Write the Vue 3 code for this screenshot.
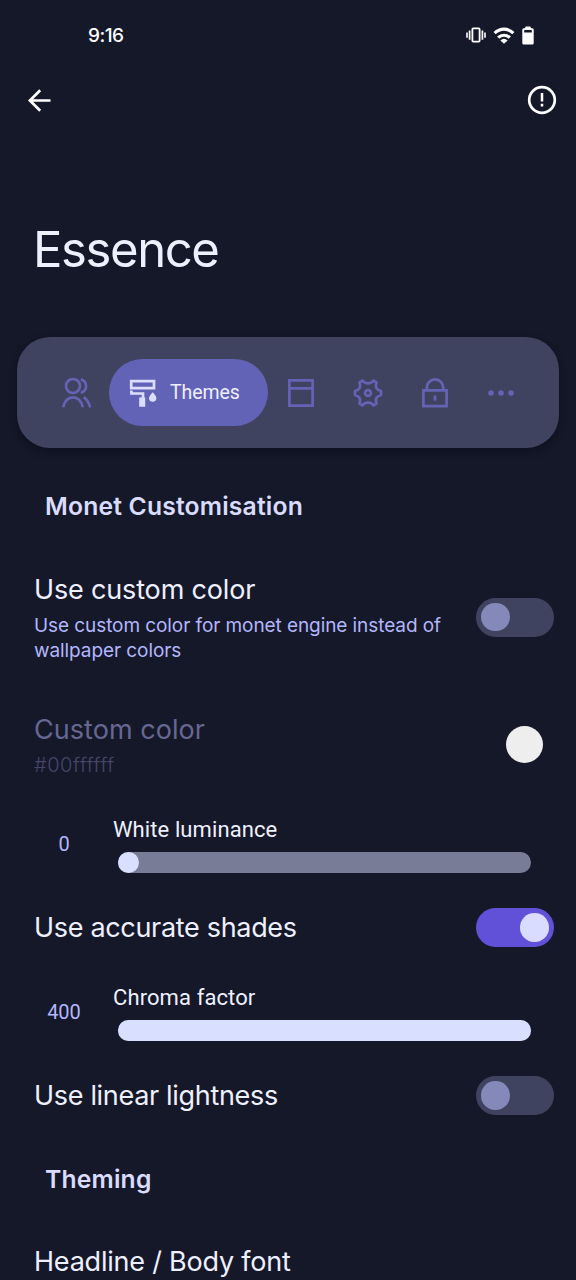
<script setup>
import { ref } from 'vue'

const customColor = ref(false)
const accurateShades = ref(true)
const linearLightness = ref(false)
const luminance = { label: 'White luminance', value: 0, max: 400 }
const chroma = { label: 'Chroma factor', value: 400, max: 400 }

const fill = (s) => ({ width: `calc(21px + (100% - 21px) * ${s.value / s.max})` })
</script>

<template>
  <div class="screen">
    <header class="status">
      <span class="clock">9:16</span>
      <div class="indicators">
        <svg width="20" height="16" viewBox="0 0 20 16" fill="none" stroke="#fff">
          <rect x="6.4" y="1.4" width="7.2" height="13.2" rx="0.8" stroke-width="1.8" />
          <path d="M3.6 3.4v9.4M16.4 3.4v9.4" stroke-width="1.7" />
          <path d="M1 5.4v5.4M19 5.4v5.4" stroke-width="1.6" />
        </svg>
        <svg width="22" height="17" viewBox="0 0 22 17" fill="none" stroke="#fff" stroke-width="3.1">
          <path d="M1.6 6.2C7 .8 15 .8 20.4 6.2" />
          <path d="M5.2 10.6c3.200-3.200 8.400-3.200 11.600 0" />
          <path d="M7.400 13.400Q11 10.200 14.600 13.400L11 16.800Z" fill="#fff" stroke="none" />
        </svg>
        <svg width="12" height="19" viewBox="0 0 12 19">
          <path
            d="M3.200 1.500q0-1 1-1h3.600q1 0 1 1v.8h1.400q1.500 0 1.500 1.500v13.200q0 1.500-1.500 1.500H1.800Q.3 18.500.3 17V3.800Q.3 2.300 1.800 2.300h1.400zM2.200 4v2.600h7.600V4z"
            fill="#fff" fill-rule="evenodd"
          />
        </svg>
      </div>
    </header>

    <nav class="toolbar">
      <svg width="24" height="24" viewBox="0 0 24 24" fill="none" stroke="#fff" stroke-width="2.700">
        <path d="M23.500 12.500H3.500M13.200 2.200 2.900 12.500l10.300 10.300" />
      </svg>
      <svg width="30" height="30" viewBox="0 0 30 30" fill="none" stroke="#fff" stroke-width="2.700">
        <circle cx="15" cy="15" r="12.800" />
        <path d="M15 8v8.500M15 18.800v2.700" stroke-width="2.500" />
      </svg>
    </nav>

    <h1>Essence</h1>

    <div class="tabs">
      <svg width="31" height="31" viewBox="0 0 31 31">
        <circle cx="12" cy="9" r="7" />
        <path d="M2.200 30.300C4.500 17 19.500 17 21.800 30.300" />
        <path d="M19.800 2.500c7 1.500 7 11.700 0 13.200M22.800 20.200q4.500 3.200 6.400 10.100" />
      </svg>
      <div class="pill">
        <svg width="28" height="28" viewBox="0 0 28 28">
          <path d="M2.200 2.200h22.800v7h-22.800z" fill="none" stroke="#dcdeff" stroke-width="2.700" />
          <path d="M2.400 11.500v3h11.600v5" fill="none" stroke="#dcdeff" stroke-width="2.700" />
          <path d="M10.200 18.600h6v9.200h-6zM23.700 13.200q3.700 4 3.700 5.800a3.700 3.700 0 0 1-7.400 0q0-1.800 3.700-5.800z" fill="#dcdeff" />
        </svg>
        <span>Themes</span>
      </div>
      <svg class="window" width="26" height="28" viewBox="0 0 26 28">
        <path d="M1.400 1.400h23.200v25.200H1.400zM1.400 9.400h23.200" />
      </svg>
      <svg class="gear" width="30" height="28" viewBox="0 0 30 28">
        <path
          d="M9.400 1.500Q11.500 4.300 15 4.300T20.600 1.500L23.600 3.600Q22.200 7 23.600 9.200T28 12V16Q25 16.600 23.600 18.800T23.600 24.400L20.600 26.500Q18.500 23.700 15 23.700T9.400 26.500L6.400 24.400Q7.800 21 6.400 18.800T2 16V12Q5 11.400 6.400 9.200T6.400 3.600Z"
          stroke-linejoin="round"
        />
        <circle cx="15" cy="14" r="2.900" />
      </svg>
      <svg class="lock" width="26" height="30" viewBox="0 0 26 30">
        <path d="M1.400 12.400h23.200v15.700H1.400zM4.900 12V9.500a8.100 8.100 0 0 1 16.200 0V12" />
        <path d="M13 17.500v5.200" />
      </svg>
      <svg class="dots" width="26" height="6" viewBox="0 0 26 6">
        <circle cx="3" cy="3" r="2.800" /><circle cx="13" cy="3" r="2.800" /><circle cx="23" cy="3" r="2.800" />
      </svg>
    </div>

    <h2>Monet Customisation</h2>

    <section class="row tall">
      <div class="copy">
        <div class="title">Use custom color</div>
        <div class="sub">Use custom color for monet engine instead of wallpaper colors</div>
      </div>
      <button class="switch" :class="{ on: customColor }" @click="customColor = !customColor"></button>
    </section>

    <section class="row color">
      <div class="copy">
        <div class="title dim">Custom color</div>
        <div class="sub hex">#00ffffff</div>
      </div>
      <span class="swatch"></span>
    </section>

    <section class="slider">
      <span class="value">{{ luminance.value }}</span>
      <div class="control">
        <div class="label">{{ luminance.label }}</div>
        <div class="track"><div class="fill" :style="fill(luminance)"></div></div>
      </div>
    </section>

    <section class="row">
      <div class="title tight">Use accurate shades</div>
      <button class="switch" :class="{ on: accurateShades }" @click="accurateShades = !accurateShades"></button>
    </section>

    <section class="slider">
      <span class="value">{{ chroma.value }}</span>
      <div class="control">
        <div class="label">{{ chroma.label }}</div>
        <div class="track"><div class="fill" :style="fill(chroma)"></div></div>
      </div>
    </section>

    <section class="row">
      <div class="title tight">Use linear lightness</div>
      <button class="switch" :class="{ on: linearLightness }" @click="linearLightness = !linearLightness"></button>
    </section>

    <h2 class="theming">Theming</h2>
    <div class="title last">Headline / Body font</div>
  </div>
</template>

<style>
body { background: #151829; }
</style>

<style scoped>
.screen {
  height: 1280px;
  overflow: hidden;
  background: #151829;
  color: #eff0ff;
  font-family: Inter, "Open Sans", sans-serif;
}
.screen * { box-sizing: border-box; }
.status {
  height: 70px;
  padding: 0 42px 0 88px;
  display: flex;
  align-items: center;
  justify-content: space-between;
}
.clock { color: #fff; font-size: 19px; font-weight: 500; letter-spacing: -0.5px; }
.indicators { display: flex; align-items: center; gap: 7px; }
.toolbar {
  height: 60px;
  padding: 0 19px 0 27px;
  display: flex;
  align-items: center;
  justify-content: space-between;
}
h1 {
  margin: 0;
  height: 207px;
  padding: 90px 0 0 33px;
  font-size: 49px;
  font-weight: 400;
  line-height: 60px;
  letter-spacing: -1.400px;
}
.tabs {
  height: 111px;
  margin: 0 17px;
  padding-left: 44px;
  display: flex;
  align-items: center;
  border-radius: 33px;
  background: #40435f;
  box-shadow: 0 3px 8px rgba(5, 6, 18, 0.45);
}
.tabs > svg { flex: none; fill: none; stroke: #6563b5; stroke-width: 2.700; }
.pill {
  width: 159px;
  height: 67px;
  margin-left: 17px;
  padding-left: 20px;
  display: flex;
  align-items: center;
  gap: 13px;
  border-radius: 34px;
  background: #6263b7;
  color: #f0efff;
  font: 19.500px/26px Roboto, sans-serif;
  letter-spacing: -0.100px;
}
.window { margin-left: 20px; }
.gear { margin-left: 38.500px; }
.lock { margin-left: 39px; }
.tabs > .dots { margin-left: 40.500px; fill: #6563b5; stroke: none; }
h2 {
  margin: 0;
  height: 100px;
  padding: 43px 0 0 45px;
  color: #d9dcff;
  font-size: 24.700px;
  font-weight: 600;
  line-height: 30px;
  letter-spacing: 0.180px;
}
.theming { height: 103px; padding-top: 25px; }
.row {
  height: 87px;
  padding: 0 22px 0 34px;
  display: flex;
  align-items: center;
  justify-content: space-between;
}
.tall { height: 138px; }
.color { height: 117px; padding-right: 33px; }
.copy { align-self: flex-start; width: 420px; padding-top: 24px; }
.tall .copy { padding-top: 22px; }
.title { font-size: 27px; line-height: 40px; letter-spacing: -0.160px; }
.tight { letter-spacing: -0.320px; }
.last { padding-left: 34px; letter-spacing: -0.220px; }
.dim { color: #666792; letter-spacing: 0.050px; }
.sub { margin-top: 3px; color: #b3b6fc; font-size: 19px; line-height: 25px; letter-spacing: -0.080px; }
.hex { color: #45466a; font-size: 20px; font-weight: 300; letter-spacing: 0.550px; }
.switch {
  width: 78px;
  height: 39px;
  padding: 0 5px;
  border: 0;
  border-radius: 20px;
  display: flex;
  align-items: center;
  background: #40435f;
}
.switch::before { content: ""; width: 28.500px; height: 28.500px; border-radius: 50%; background: #8589b9; }
.switch.on { justify-content: flex-end; padding-right: 5.500px; background: #6151d8; }
.switch.on::before { background: #d9dcff; }
.swatch { width: 37px; height: 37px; border-radius: 50%; background: #eee; }
.slider {
  height: 81px;
  padding: 14px 45px 0 15px;
  display: flex;
  font-family: Roboto, sans-serif;
  line-height: 26px;
}
.value { width: 98px; padding-top: 14px; text-align: center; color: #b3b6fc; font-size: 20px; }
.control { flex: 1; }
.label { font-size: 22px; letter-spacing: 0.100px; }
.track { height: 21px; margin: 9px 0 0 5px; border-radius: 11px; background: #797c96; }
.fill { height: 100%; border-radius: 11px; background: #d9dfff; }
</style>
